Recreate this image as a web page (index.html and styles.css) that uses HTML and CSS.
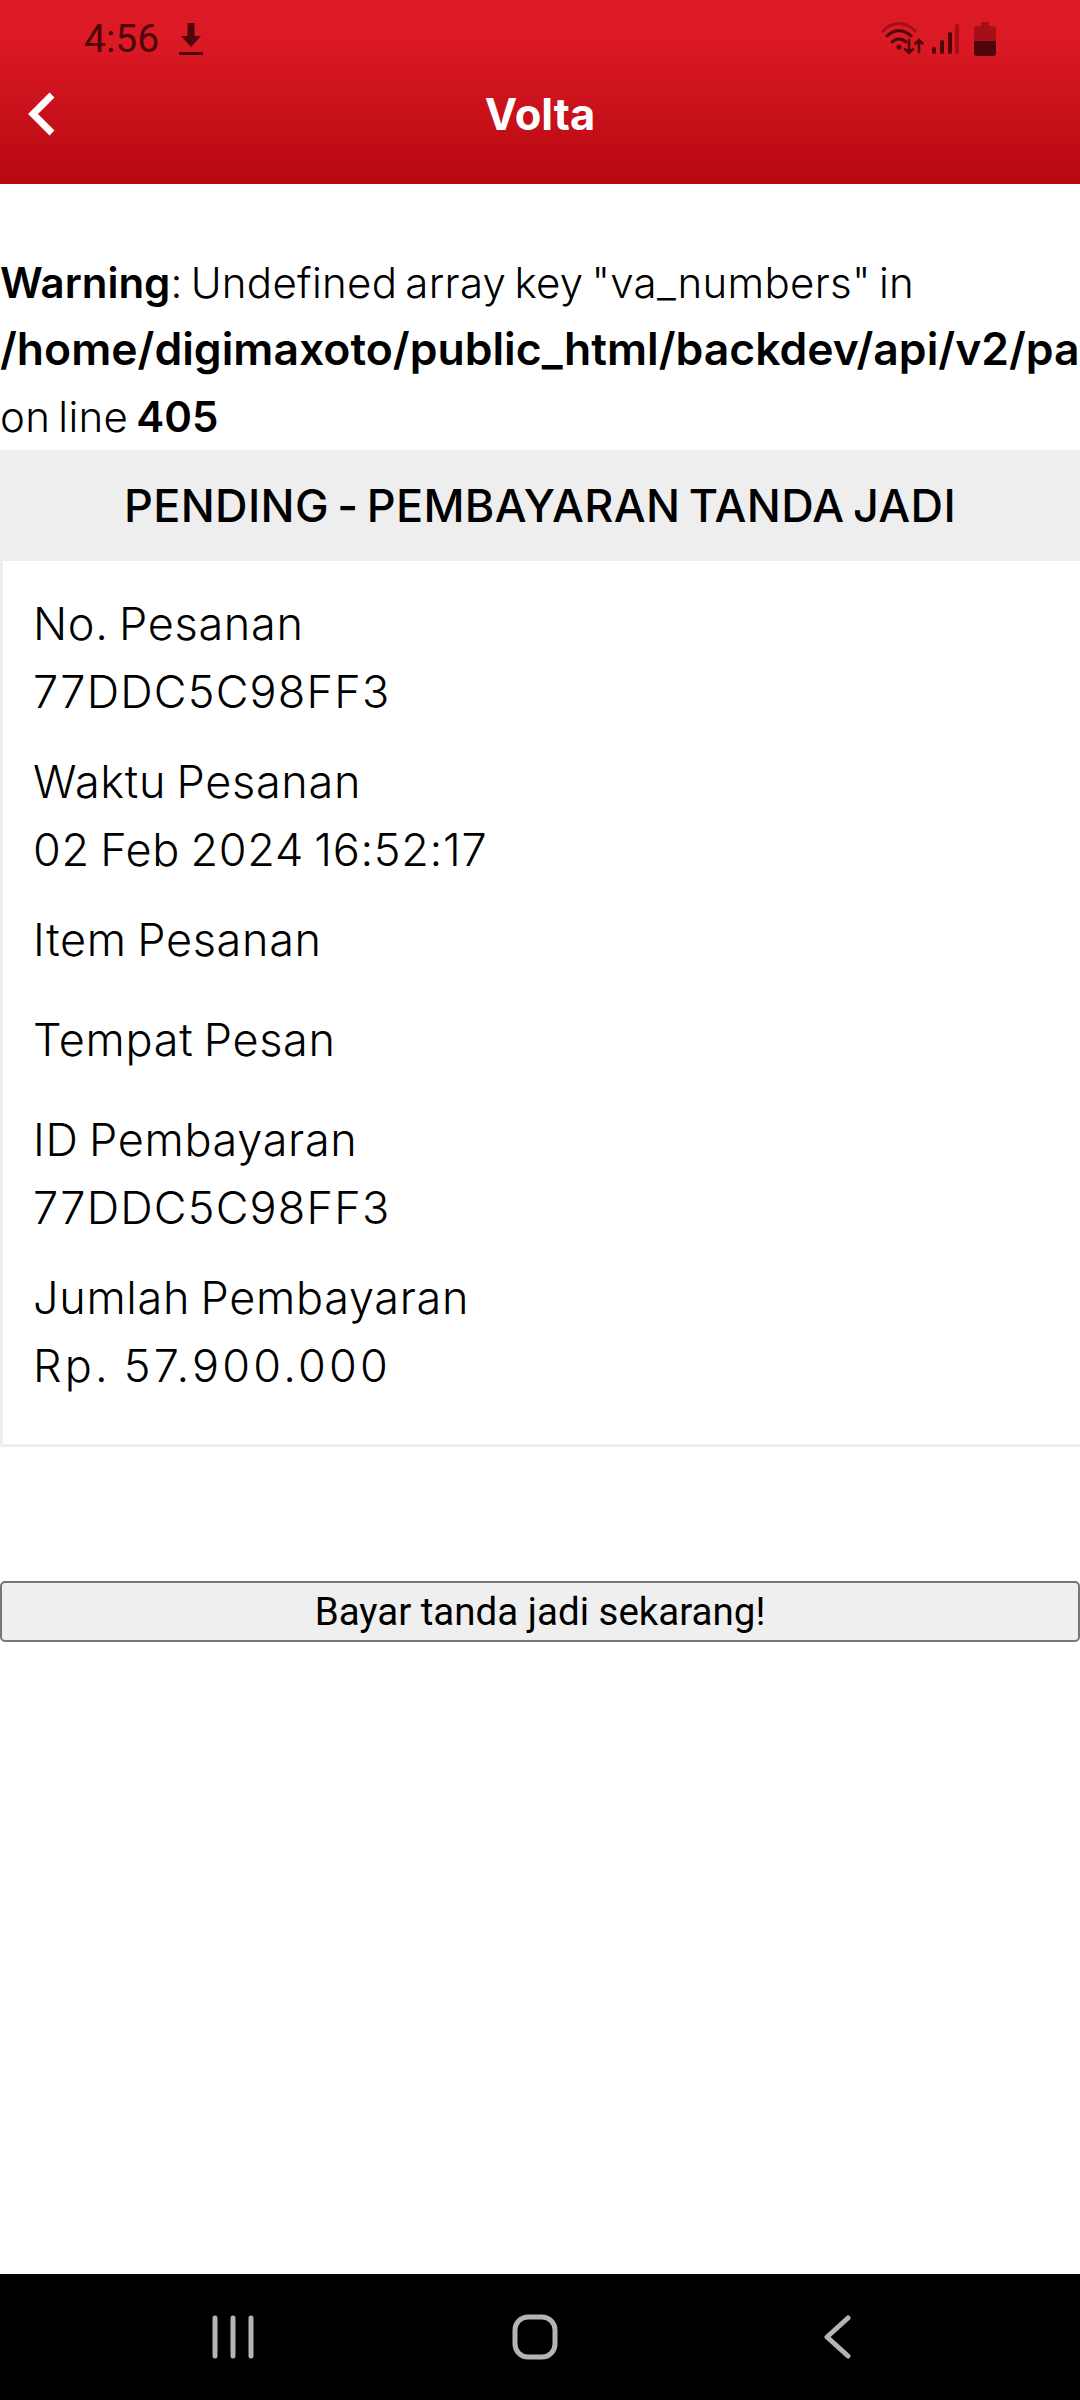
FILE: index.html
```html
<!DOCTYPE html>
<html>
<head>
    <meta charset="utf-8">
    <title>Volta</title>
    <meta name="viewport" content="width=device-width, initial-scale=1">
    <link rel="stylesheet" href="styles.css">
</head>
<body>
    <div class="phone">
        <header class="app-header">
            <div class="status-bar">
                <div class="status-left">
                    <span class="status-time">4:56</span>
                    <svg class="icon-download" width="24" height="34" viewBox="0 0 24 34">
                        <path d="M8.500 1h7v13h6.500L12 25 2 14h6.500z" fill="#4f0509"/>
                        <rect x="0" y="30" width="24" height="3" fill="#4f0509"/>
                    </svg>
                </div>
                <div class="status-right">
                    <svg width="44" height="34" viewBox="0 0 44 34" fill="none" stroke-linecap="round">
                        <path d="M2 9C11 -1 25 -1 34 9" stroke="#a50f17" stroke-width="3"/>
                        <path d="M6 14C13 7 23 7 30 14" stroke="#4f0509" stroke-width="3"/>
                        <path d="M11 20C15 16 21 16 25 20" stroke="#4f0509" stroke-width="3"/>
                        <circle cx="18" cy="25" r="2.500" fill="#4f0509"/>
                        <path d="M28 18V31M24 27l4 4 4-4" stroke="#4f0509" stroke-width="2.500"/>
                        <path d="M38 30V18M34.500 21.500L38 18l3.500 3.500" stroke="#4f0509" stroke-width="2.500"/>
                    </svg>
                    <svg class="icon-signal" width="28" height="32" viewBox="0 0 28 32">
                        <rect x="1" y="24" width="4" height="7" rx="2" fill="#4f0509"/>
                        <rect x="9" y="17" width="4" height="14" rx="2" fill="#4f0509"/>
                        <rect x="17" y="9" width="4" height="22" rx="2" fill="#4f0509"/>
                        <rect x="24" y="1" width="4" height="30" rx="2" fill="#a50f17"/>
                    </svg>
                    <svg class="icon-battery" width="22" height="34" viewBox="0 0 22 34">
                        <path d="M7 0h8v4h4a3 3 0 0 1 3 3v12H0V7a3 3 0 0 1 3-3h4z" fill="#a50f17"/>
                        <path d="M0 19h22v12a3 3 0 0 1-3 3H3a3 3 0 0 1-3-3z" fill="#4f0509"/>
                    </svg>
                </div>
            </div>
            <div class="title-bar">
                <svg class="icon-back" width="28" height="44" viewBox="0 0 28 44">
                    <path d="M24 3L5 22l19 19" fill="none" stroke="#fff" stroke-width="7"/>
                </svg>
                <h1>Volta</h1>
            </div>
        </header>

        <main class="content">
            <p class="php-warning"><b>Warning</b>: Undefined array key "va_numbers" in<br><b class="php-path">/home/digimaxoto/public_html/backdev/api/v2/pa</b><br>on line <b>405</b></p>

            <div class="order-title">PENDING - PEMBAYARAN TANDA JADI</div>
            <div class="order-box">
                <div class="order-row">No. Pesanan<br><span class="value-id">77DDC5C98FF3</span></div>
                <div class="order-row">Waktu Pesanan<br>02 Feb 2024 16:52:17</div>
                <div class="order-row order-row-empty">Item Pesanan</div>
                <div class="order-row order-row-empty">Tempat Pesan</div>
                <div class="order-row">ID Pembayaran<br><span class="value-id">77DDC5C98FF3</span></div>
                <div class="order-row">Jumlah Pembayaran<br><span class="value-amount">Rp. 57.900.000</span></div>
            </div>

            <button class="pay-btn">Bayar tanda jadi sekarang!</button>
        </main>

        <nav class="nav-bar">
            <svg width="42" height="44" viewBox="0 0 42 44">
                <path d="M3 3v38M21 3v38M39 3v38" stroke="#b4b4b4" stroke-width="5" stroke-linecap="round"/>
            </svg>
            <svg width="46" height="46" viewBox="0 0 46 46">
                <rect x="3" y="3" width="40" height="40" rx="13" fill="none" stroke="#b4b4b4" stroke-width="5"/>
            </svg>
            <svg width="28" height="44" viewBox="0 0 28 44">
                <path d="M25 3L4 22l21 19" fill="none" stroke="#b4b4b4" stroke-width="5" stroke-linecap="round" stroke-linejoin="round"/>
            </svg>
        </nav>
    </div>
</body>
</html>
```

FILE: styles.css
```css
body {
    margin: 0;
    font-family: "Inter", "Noto Sans", sans-serif;
    color: #000;
    background: #fff;
}
.phone {
    width: 1080px;
    height: 2400px;
    display: flex;
    flex-direction: column;
    overflow: hidden;
}
.app-header {
    height: 184px;
    background: linear-gradient(#dc1a25, #dc1a25 20%, #b70811);
}
.status-bar {
    height: 78px;
    display: flex;
    justify-content: space-between;
    align-items: center;
    padding: 0 84px 0 84px;
}
.status-left, .status-right {
    display: flex;
    align-items: center;
}
.status-time {
    font-family: Roboto, sans-serif;
    font-size: 39px;
    color: #4f0509;
}
.icon-download {
    margin-left: 20px;
}
.icon-signal {
    margin-left: 6px;
}
.icon-battery {
    margin-left: 15px;
}
.title-bar {
    position: relative;
    height: 72px;
    display: flex;
    align-items: center;
    justify-content: center;
}
.title-bar h1 {
    margin: 0;
    font-size: 43.500px;
    font-weight: 700;
    color: #fff;
}
.icon-back {
    position: absolute;
    left: 28px;
    top: 14px;
}
.content {
    flex: 1;
    min-height: 0;
}
.php-warning {
    margin: 65px 0 0;
    font-size: 42px;
    font-weight: 300;
    line-height: 67px;
    letter-spacing: 0.300px;
    word-spacing: -4px;
    white-space: nowrap;
}
.php-warning b {
    font-weight: 600;
    letter-spacing: 0;
}
.php-warning .php-path {
    font-size: 44.500px;
    line-height: 1;
}
.order-title {
    height: 111px;
    line-height: 111px;
    background: #eee;
    text-align: center;
    font-size: 45px;
    font-weight: 500;
    letter-spacing: 0.350px;
    word-spacing: -4px;
}
.order-box {
    height: 886px;
    box-sizing: border-box;
    padding: 29px 0 0 30px;
    border-left: 3px solid #eee;
    border-bottom: 3px solid #eee;
}
.order-row {
    font-size: 45px;
    font-weight: 300;
    line-height: 68px;
    letter-spacing: 0.700px;
    word-spacing: -3px;
    margin-bottom: 22px;
}
.order-row-empty {
    margin-bottom: 32px;
}
.value-id {
    letter-spacing: 1.200px;
}
.value-amount {
    letter-spacing: 3.200px;
}
.pay-btn {
    display: block;
    width: 1080px;
    height: 61px;
    margin-top: 134px;
    padding: 0;
    font-family: Roboto, sans-serif;
    font-size: 38.500px;
    color: #000;
    background: #efefef;
    border: 2px solid #767676;
    border-radius: 5px;
}
.nav-bar {
    height: 126px;
    background: #000;
    display: grid;
    grid-template-columns: repeat(3, 302px);
    justify-items: center;
    align-items: center;
    padding-left: 82px;
}
```
